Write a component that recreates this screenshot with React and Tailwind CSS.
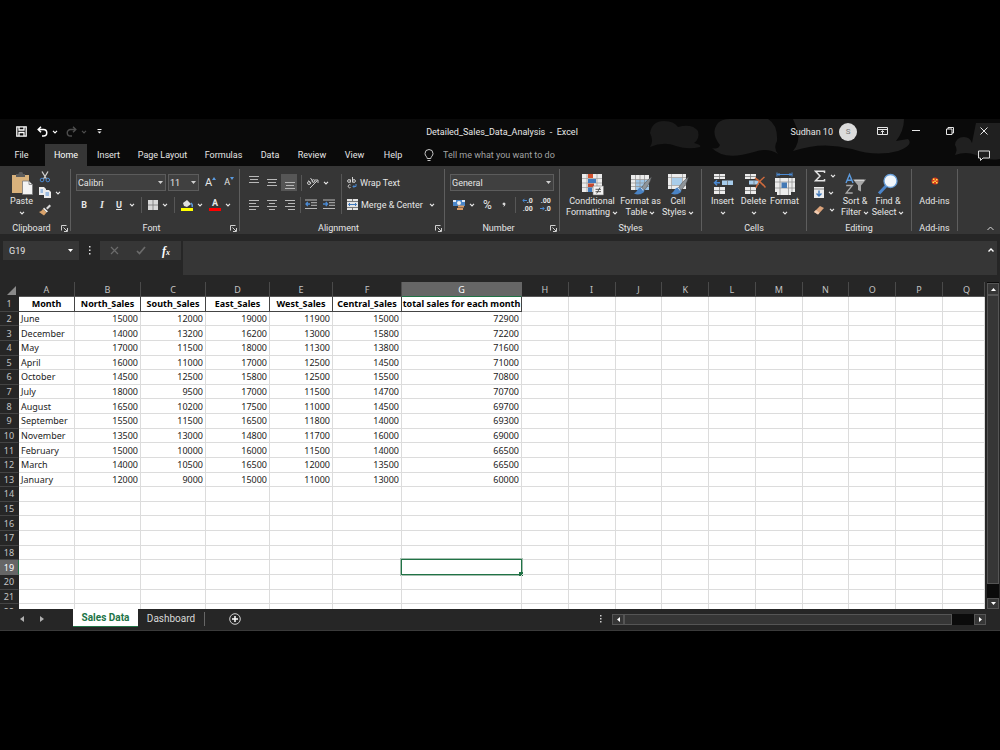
import React from "react";

const months = [
  ["June", 15000, 12000, 19000, 11900, 15000, 72900],
  ["December", 14000, 13200, 16200, 13000, 15800, 72200],
  ["May", 17000, 11500, 18000, 11300, 13800, 71600],
  ["April", 16000, 11000, 17000, 12500, 14500, 71000],
  ["October", 14500, 12500, 15800, 12500, 15500, 70800],
  ["July", 18000, 9500, 17000, 11500, 14700, 70700],
  ["August", 16500, 10200, 17500, 11000, 14500, 69700],
  ["September", 15500, 11500, 16500, 11800, 14000, 69300],
  ["November", 13500, 13000, 14800, 11700, 16000, 69000],
  ["February", 15000, 10000, 16000, 11500, 14000, 66500],
  ["March", 14000, 10500, 16500, 12000, 13500, 66500],
  ["January", 12000, 9000, 15000, 11000, 13000, 60000],
];
const headings = ["Month", "North_Sales", "South_Sales", "East_Sales", "West_Sales", "Central_Sales", "total sales for each month"];
const letters = "ABCDEFGHIJKLMNOPQ".split("");
const colWidths = ["w-[56px]", "w-[66px]", "w-[65px]", "w-[64px]", "w-[63px]", "w-[69px]", "w-[120px]"];
const rowNumbers = Array.from({ length: 22 }, (_, i) => i + 1);

function Chevron({ className = "" }) {
  return (
    <svg className={"shrink-0 " + className} width="6" height="4" viewBox="0 0 6 4" fill="none" stroke="currentColor" strokeWidth="1.2">
      <path d="M1 .8 3 2.8 5 .8" />
    </svg>
  );
}

function Caret({ className = "" }) {
  return (
    <svg className={"shrink-0 " + className} width="5" height="3" viewBox="0 0 5 3" fill="currentColor">
      <path d="M0 0H5L2.5 3Z" />
    </svg>
  );
}

function Group({ label, width, launcher, children }) {
  return (
    <section className={"flex shrink-0 flex-col " + width}>
      <div className="flex min-h-0 flex-1">
        <div className="flex min-w-0 flex-1 flex-col">
          <div className="h-[55px]">{children}</div>
          <div className="flex h-[13px] items-center">
            <span className={"flex-1 text-center " + (launcher ? "pl-0.5" : "")}>{label}</span>
            {launcher && (
              <button aria-label={label + " settings"} className="mr-0.5 mt-px text-[#d0d0d0]">
                <svg width="7" height="7" viewBox="0 0 7 7" fill="none" stroke="currentColor">
                  <path d="M.5 5.5V.5H5.5M2.5 2.5 6 6M6.5 3V6.5H3" />
                </svg>
              </button>
            )}
          </div>
        </div>
        <div className="mb-[3px] mt-[3px] w-px bg-[#5e5e5e]" />
      </div>
    </section>
  );
}

function BigButton({ icon, lines, width }) {
  return (
    <button className={"flex flex-col items-center pt-[5px] leading-[11px] " + width}>
      <span className="flex h-[25px] items-center justify-center">{icon}</span>
      <span className="whitespace-nowrap">{lines[0]}</span>
      <span className="flex h-[11px] items-center gap-[2px] whitespace-nowrap">
        {lines[1]}
        <Chevron />
      </span>
    </button>
  );
}

function IconButton({ label, chevron, className = "", children }) {
  return (
    <button aria-label={label} className={"flex shrink-0 items-center gap-1 " + className}>
      {children}
      {chevron && <Chevron />}
    </button>
  );
}

function Lines({ rows, color = "#b8b8b8" }) {
  return (
    <svg width="11" height="11" viewBox="0 0 11 11" stroke={color}>
      {rows.map(([x1, x2, y]) => (
        <path key={y} d={`M${x1} ${y}.5H${x2}`} />
      ))}
    </svg>
  );
}

function Divider({ height = "h-4" }) {
  return <span className={"w-px shrink-0 bg-[#575757] " + height} />;
}

function Grid({ children }) {
  return (
    <svg width="24" height="24" viewBox="0 0 24 24">
      {children}
    </svg>
  );
}

const PasteIcon = (
  <svg width="22" height="23" viewBox="0 0 22 23">
    <path d="M1 3H18V21H1Z" fill="#d9b27c" />
    <path d="M5 2H7.500a2.200 2.200 0 0 1 4.500 0H14V5H5Z" fill="#5c5c5c" />
    <path d="M11.500 9H18L21.500 12.500V22.500H11.500Z" fill="#f3f3f3" stroke="#777" strokeWidth=".8" />
    <path d="M18 9V12.500H21.500" fill="none" stroke="#777" strokeWidth=".8" />
  </svg>
);

const brush = (
  <g>
    <path d="M22.500 5C18 8 14 13 12.500 16L15.500 18C18 15 21 11 22.500 5Z" fill="#8e9499" stroke="#454545" strokeWidth=".5" />
    <path d="M12 15.500C8.500 15.500 8.500 20 5 21.500C9 23.500 15 22 15.500 18.500Z" fill="#4a83c4" />
    <path d="M12 16.500c1.500 0 2 1 2 2" stroke="#cfe2f5" fill="none" />
  </g>
);

const ConditionalIcon = (
  <Grid>
    <path d="M2 2H22V20H2Z" fill="#ececec" />
    <path d="M2 6.500H22M2 11H22M2 15.500H22M7 2V20M17 2V20" stroke="#9a9a9a" strokeWidth=".7" />
    <path d="M8 2H13V6H8Z" fill="#d35230" />
    <path d="M8 7H16V11H8Z" fill="#3f79bd" />
    <path d="M8 11.500H14V15H8Z" fill="#c5482f" />
    <path d="M8 15.500H12V20H8Z" fill="#3f79bd" />
    <path d="M13 14H23.500V23H13Z" fill="#f4f4f4" stroke="#777" strokeWidth=".6" />
    <path d="M15.500 17.300H21M15.500 19.700H21M20 15.500 16.700 21.500" stroke="#444" strokeWidth=".9" />
  </Grid>
);

const FormatTableIcon = (
  <Grid>
    <path d="M2 3H20V18H2Z" fill="#ececec" />
    <path d="M7 8H20V18H7Z" fill="#9fc6e8" />
    <path d="M2 7.500H20M2 11H20M2 14.500H20M6.500 3V18M11 3V18M15.500 3V18" stroke="#8c8c8c" strokeWidth=".7" />
    {brush}
  </Grid>
);

const CellStylesIcon = (
  <Grid>
    <path d="M2 2H20V17H2Z" fill="#ececec" />
    <path d="M6 6H16V13H6Z" fill="#a9cdea" />
    <path d="M2 5.500H20M2 13.500H20M5.500 2V17M16.500 2V17" stroke="#9a9a9a" strokeWidth=".7" />
    {brush}
  </Grid>
);

const InsertIcon = (
  <Grid>
    <path d="M3 2H14V7H3ZM3 15H14V22H3Z" fill="#ececec" />
    <path d="M11 8.500H22V13H11Z" fill="#a6cbea" />
    <path d="M3 4.500H14M3 18.500H14M8.500 2V7M8.500 15V22M16.500 8.500V13" stroke="#777" strokeWidth=".8" />
    <path d="M9 10.700H3.500M6 8.200 3.500 10.700 6 13.200" stroke="#4a8ad4" strokeWidth="1.500" fill="none" />
  </Grid>
);

const DeleteIcon = (
  <Grid>
    <path d="M3 2H14V7H3ZM3 15H14V22H3Z" fill="#ececec" />
    <path d="M7 8.500H17V12.500H7Z" fill="#a6cbea" />
    <path d="M3 4.500H14M3 18.500H14M8.500 2V7M8.500 15V22M12 8.500V12.500" stroke="#777" strokeWidth=".8" />
    <path d="M13 6Q18 9 23.500 15.500M22.500 5Q16 10 14 16" stroke="#cf6a3c" strokeWidth="1.500" fill="none" />
  </Grid>
);

const FormatIcon = (
  <Grid>
    <path d="M4 2.500H19M4 .5V4.500M19 .5V4.500M6.500 1 5 2.500 6.500 4M16.500 1 18 2.500 16.500 4" stroke="#4a8ad4" fill="none" />
    <path d="M2 6H22V20H2ZM4 20H18V23H4Z" fill="#ececec" />
    <path d="M2 10H22M2 16H22M7 6V23M15.500 6V23M19 6V20" stroke="#8a8a8a" strokeWidth=".7" />
    <path d="M8.500 10.500H14V16H8.500Z" fill="#4479b5" />
  </Grid>
);

const SortIcon = (
  <svg width="24" height="24" viewBox="0 0 24 24" fill="none">
    <path d="M3 11 6.500 2.500 10 11M4.200 8.200H8.800" stroke="#5b9be0" strokeWidth="1.400" />
    <path d="M3.200 13.500H9.300L3.200 21H9.700" stroke="#a9a9a9" strokeWidth="1.300" />
    <path d="M10 7.500H23L18 13.500V19.500L15 18V13.500Z" fill="#a6a6a6" />
    <path d="M11.500 8.300H21" stroke="#ddd" />
  </svg>
);

const FindIcon = (
  <svg width="24" height="24" viewBox="0 0 24 24" fill="none">
    <path d="M10.500 13.500 3 21.500" stroke="#4b84c9" strokeWidth="3" />
    <circle cx="14.500" cy="9" r="6.500" fill="#f1f6fb" stroke="#6aa0da" strokeWidth="1.300" />
  </svg>
);

function TitleBar() {
  return (
    <header className="flex h-[25px] items-center">
      <div className="flex flex-1 items-center pl-4">
        <button aria-label="Save" className="text-white">
          <svg width="11" height="11" viewBox="0 0 11 11" fill="none" stroke="currentColor" strokeWidth="1.300">
            <path d="M.8.8H10.200V10.200H.8ZM3 .8V4H8V.8M3 10V6.500H8V10" />
          </svg>
        </button>
        <IconButton label="Undo" chevron className="ml-2.5 text-white">
          <svg width="11" height="11" viewBox="0 0 11 11" fill="none" stroke="currentColor" strokeWidth="1.500">
            <path d="M4 .8 1.200 3.500 4 6.300M1.200 3.500H6.500a3 3 0 0 1 0 6.500H5" />
          </svg>
        </IconButton>
        <IconButton label="Redo" chevron className="ml-2 text-[#4d4d4d]">
          <svg width="11" height="11" viewBox="0 0 11 11" fill="none" stroke="currentColor" strokeWidth="1.400">
            <path d="M7 .8 9.800 3.500 7 6.300M9.800 3.500H4.500a3 3 0 0 0 0 6.500H6" />
          </svg>
        </IconButton>
        <button aria-label="Customize toolbar" className="ml-2.5 text-white">
          <svg width="5" height="5" viewBox="0 0 5 5" fill="currentColor">
            <path d="M.5 0H4.500V1H.5ZM.5 2.500H4.500L2.500 4.500Z" />
          </svg>
        </button>
      </div>
      <h1 className="whitespace-pre text-[#e8e8e8]">Detailed_Sales_Data_Analysis  -  Excel</h1>
      <div className="flex flex-1 items-center justify-end pr-3 text-[#e6e6e6]">
        <span>Sudhan 10</span>
        <span className="ml-1.5 flex size-[18px] items-center justify-center rounded-full bg-[#dcdcdc] text-[8px] text-[#777]">S</span>
        <button aria-label="Ribbon display options" className="ml-5">
          <svg width="11" height="9" viewBox="0 0 11 9" fill="none" stroke="currentColor">
            <path d="M.5 .5H10.500V7.500H.5ZM.5 2.500H10.500M5.500 7V4M3.800 5.200 5.500 3.500 7.200 5.200" />
          </svg>
        </button>
        <button aria-label="Minimize" className="ml-6">
          <svg width="8" height="9" viewBox="0 0 8 9" stroke="currentColor"><path d="M0 3.500H8" /></svg>
        </button>
        <button aria-label="Restore" className="mb-0.5 ml-[26px]">
          <svg width="8" height="8" viewBox="0 0 8 8" fill="none" stroke="currentColor">
            <path d="M.5 2H6V7.500H.5ZM2 2V.5H7.500V6H6" />
          </svg>
        </button>
        <button aria-label="Close" className="mb-0.5 ml-[26px]">
          <svg width="8" height="8" viewBox="0 0 8 8" stroke="currentColor"><path d="M.5.5 7.500 7.500M7.500.5.5 7.500" /></svg>
        </button>
      </div>
    </header>
  );
}

const tabs = [
  ["File", "w-[43px]"],
  ["Home", "w-[42px]"],
  ["Insert", "w-[43px]"],
  ["Page Layout", "w-[65px]"],
  ["Formulas", "w-[57px]"],
  ["Data", "w-[36px]"],
  ["Review", "w-[48px]"],
  ["View", "w-[37px]"],
  ["Help", "w-[40px]"],
];

function RibbonTabs() {
  return (
    <nav className="flex h-[22px] items-center text-[#e6e6e6]">
      {tabs.map(([name, width]) => (
        <button
          key={name}
          className={"h-full shrink-0 text-center " + width + (name === "Home" ? " bg-[#363636] text-white" : "") + (name === "File" ? " mr-0.5" : "")}
        >
          {name}
        </button>
      ))}
      <svg className="ml-[11px]" width="10" height="13" viewBox="0 0 10 13" fill="none" stroke="#c8c8c8">
        <path d="M3.200 9.500C3.200 7.500 1 7 1 4.500a4 4 0 0 1 8 0C9 7 6.800 7.500 6.800 9.500ZM3.500 11.500H6.500" />
      </svg>
      <input aria-label="Tell me what you want to do" placeholder="Tell me what you want to do" className="ml-[9px] w-40 bg-transparent placeholder:text-[#a3a3a3] placeholder:opacity-100" />
      <button aria-label="Comments" className="ml-auto mr-2.5 text-[#dcdcdc]">
        <svg width="12" height="11" viewBox="0 0 12 11" fill="none" stroke="currentColor">
          <path d="M.5 1H11.500V8H5L2.500 10.500V8H.5Z" />
        </svg>
      </button>
    </nav>
  );
}

function Combo({ label, value, width }) {
  return (
    <span className={"relative h-[17px] shrink-0 " + width}>
      <select aria-label={label} defaultValue={value} className="size-full appearance-none border border-[#5c5c5c] bg-[#404040] pl-px text-[#e6e6e6]">
        <option>{value}</option>
      </select>
      <Caret className="pointer-events-none absolute right-[3px] top-[7px] text-[#d0d0d0]" />
    </span>
  );
}

function FontGroup() {
  return (
    <Group label="Font" width="w-[169px]" launcher>
      <div className="flex h-full flex-col pl-[5px] pt-2">
        <div className="flex h-[17px] items-center">
          <Combo label="Font name" value="Calibri" width="w-[90px]" />
          <span className="w-[2px]" />
          <Combo label="Font size" value="11" width="w-[31px]" />
          <button aria-label="Increase font size" className="ml-1.5 flex text-[11px] leading-none">
            A<svg width="4" height="3" viewBox="0 0 4 3" fill="#5b9be0"><path d="M0 3 2 0 4 3Z" /></svg>
          </button>
          <button aria-label="Decrease font size" className="ml-2 flex text-[9px] leading-none">
            A<svg className="-mt-px" width="4" height="3" viewBox="0 0 4 3" fill="#5b9be0"><path d="M0 0H4L2 3Z" /></svg>
          </button>
        </div>
        <div className="mt-[5px] flex h-[17px] items-center">
          <button className="ml-1 w-2 font-bold">B</button>
          <button className="ml-2.5 w-2 font-['Liberation_Serif',serif] text-[10px] font-bold italic">I</button>
          <button className="ml-[9px] w-2 font-bold underline">U</button>
          <Chevron className="ml-1.5" />
          <span className="w-1.5" />
          <Divider />
          <IconButton label="Borders" chevron className="ml-1.5">
            <svg width="10" height="10" viewBox="0 0 10 10"><path d="M0 0H10V10H0Z" fill="#d8d8d8" /><path d="M5 0V10M0 5H10" stroke="#777" strokeWidth=".8" /></svg>
          </IconButton>
          <span className="w-1.5" />
          <Divider />
          <IconButton label="Fill color" chevron className="ml-1.5">
            <svg width="12" height="12" viewBox="0 0 12 12">
              <path d="M2 4 6 1 10 5 6 8 3 7Z" fill="#dedede" />
              <path d="M10 4Q12 6 11 8" stroke="#5b9be0" strokeWidth="1.500" fill="none" />
              <path d="M0 9H12V12H0Z" fill="#ff0" />
            </svg>
          </IconButton>
          <IconButton label="Font color" chevron className="ml-1.5">
            <span className="flex w-3 flex-col items-center text-[9px] font-bold leading-[9px]">
              A<span className="h-[3px] w-full bg-[#f00]" />
            </span>
          </IconButton>
        </div>
      </div>
    </Group>
  );
}

function AlignmentGroup() {
  const indent = (
    <path d="M0 1H12M6 3.700H12M6 6.300H12M0 9.500H12" stroke="#b8b8b8" />
  );
  return (
    <Group label="Alignment" width="w-[205px]" launcher>
      <div className="flex h-full pl-2 pt-2">
        <div className="flex w-[93px] flex-col">
          <div className="flex h-[17px] items-center">
            <button aria-label="Top align" className="mb-1.5"><Lines rows={[[1, 11, 2], [2, 10, 5], [1, 11, 8]]} /></button>
            <button aria-label="Middle align" className="ml-[7px]"><Lines rows={[[1, 11, 2], [2, 10, 5], [1, 11, 8]]} /></button>
            <button aria-label="Bottom align" className="ml-1 flex h-[17px] w-4 items-end justify-center bg-[#565656]"><Lines rows={[[1, 11, 2], [2, 10, 5], [1, 11, 8]]} /></button>
            <span className="w-1" />
            <Divider />
            <IconButton label="Orientation" chevron className="ml-1">
              <svg width="13" height="12" viewBox="0 0 13 12" fill="none" stroke="#c8c8c8">
                <circle cx="3" cy="6" r="1.500" /><path d="M2.500 3.500 5 7M4.500 1 7.500 5.500" /><circle cx="7.500" cy="4" r="1.400" /><path d="M4 11 11.500 3.500M12 6V3H9" />
              </svg>
            </IconButton>
          </div>
          <div className="mt-[5px] flex h-[17px] items-center">
            <button aria-label="Align left"><Lines rows={[[1, 11, 1], [1, 8, 4], [1, 11, 7], [1, 8, 10]]} /></button>
            <button aria-label="Center" className="ml-[7px]"><Lines rows={[[1, 11, 1], [3, 9, 4], [1, 11, 7], [3, 9, 10]]} /></button>
            <button aria-label="Align right" className="ml-[7px]"><Lines rows={[[1, 11, 1], [4, 11, 4], [1, 11, 7], [4, 11, 10]]} /></button>
            <span className="w-[5px]" />
            <Divider />
            <button aria-label="Decrease indent" className="ml-1">
              <svg width="12" height="11" viewBox="0 0 12 11" fill="none">{indent}<path d="M5 5H1M2.800 3 1 5 2.800 7" stroke="#4a8ad4" strokeWidth="1.300" /></svg>
            </button>
            <button aria-label="Increase indent" className="ml-[6px]">
              <svg width="12" height="11" viewBox="0 0 12 11" fill="none">{indent}<path d="M0 5H4M2.800 3 4.500 5 2.800 7" stroke="#4a8ad4" strokeWidth="1.300" /></svg>
            </button>
          </div>
        </div>
        <Divider height="h-10" />
        <div className="flex flex-1 flex-col pl-[5px]">
          <button className="flex h-[17px] items-center gap-[3px] whitespace-nowrap">
            <svg width="10" height="12" viewBox="0 0 10 12" fill="none" stroke="#d0d0d0">
              <circle cx="2" cy="4" r="1.400" /><path d="M3.500 2.500V5.500M5.500 0V5.500M3.500 8A1.500 1.500 0 1 0 3.500 10.500" /><circle cx="7" cy="4" r="1.400" /><path d="M9 7V9.500H6M7.200 8.200 6 9.500 7.200 10.800" stroke="#4a8ad4" />
            </svg>
            Wrap Text
          </button>
          <div className="mt-[5px] flex h-[17px] items-center">
            <button className="flex items-center gap-[3px] whitespace-nowrap">
              <svg width="11" height="11" viewBox="0 0 11 11"><path d="M0 0H11V11H0Z" fill="#e4e4e4" /><path d="M0 2.500H11M0 8.500H11M5.500 0V2.500M5.500 8.500V11" stroke="#777" /><path d="M1.500 5.500H9.500M3 4 1.500 5.500 3 7M8 4 9.500 5.500 8 7" stroke="#3f79bd" fill="none" /></svg>
              Merge &amp; Center
            </button>
            <IconButton label="Merge options" chevron className="ml-1.5" />
          </div>
        </div>
      </div>
    </Group>
  );
}

function NumberGroup() {
  return (
    <Group label="Number" width="w-[115px]" launcher>
      <div className="flex h-full flex-col pl-[5px] pt-2">
        <Combo label="Number format" value="General" width="w-[104px]" />
        <div className="mt-[5px] flex h-[17px] items-center">
          <IconButton label="Accounting format" chevron className="ml-[3px]">
            <svg width="12" height="12" viewBox="0 0 12 12">
              <path d="M0 1H12V7H0Z" fill="#4a86c8" /><circle cx="6" cy="4" r="2" fill="#eee" /><path d="M0 1H3V3H0ZM9 1H12V3H9Z" fill="#dfe9f5" />
              <path d="M5 6.500H11V8.500H5ZM4 9H10V11H4Z" fill="#d99a63" />
            </svg>
          </IconButton>
          <button aria-label="Percent style" className="ml-2 text-[12px]">%</button>
          <button aria-label="Comma style" className="ml-2.5 flex h-[12px] items-start">
            <svg width="4" height="11" viewBox="0 0 4 11" fill="#d8d8d8"><path d="M.5 5A1.500 1.500 0 1 1 3.500 5Q3.500 7 1 8Q2 7 2 6.200Q.5 6 .5 5Z" /></svg>
          </button>
          <span className="w-[9px]" />
          <Divider />
          <button aria-label="Increase decimal" className="ml-1.5 flex flex-col items-end text-[7px] font-bold leading-[8px]">
            <span className="flex items-center"><svg width="5" height="5" viewBox="0 0 5 5" fill="none" stroke="#4a8ad4"><path d="M5 2.500H1M2.500 .8 .8 2.500 2.500 4.200" /></svg>.0</span>
            <span>.00</span>
          </button>
          <button aria-label="Decrease decimal" className="ml-[7px] flex flex-col items-end text-[7px] font-bold leading-[8px]">
            <span>.00</span>
            <span className="flex items-center"><svg width="5" height="5" viewBox="0 0 5 5" fill="none" stroke="#4a8ad4"><path d="M0 2.500H4M2.500 .8 4.200 2.500 2.500 4.200" /></svg>.0</span>
          </button>
        </div>
      </div>
    </Group>
  );
}

function Ribbon() {
  return (
    <div className="flex h-[68px] bg-[#363636] text-[#e6e6e6]">
      <Group label="Clipboard" width="w-[71px]" launcher>
        <div className="flex h-full">
          <BigButton icon={PasteIcon} lines={["Paste", ""]} width="ml-[6px] w-[31px]" />
          <div className="flex flex-col pl-0.5 pt-1">
            <IconButton label="Cut" className="h-[13px]">
              <svg width="12" height="12" viewBox="0 0 12 12" fill="none"><path d="M3 .5 7.500 8M9 .5 4.500 8" stroke="#d0d0d0" strokeWidth="1.300" /><circle cx="3" cy="9" r="1.800" stroke="#4a8ad4" /><circle cx="8.800" cy="9" r="1.800" stroke="#4a8ad4" /></svg>
            </IconButton>
            <IconButton label="Copy" chevron className="mt-[3px] h-[13px]">
              <svg width="12" height="11" viewBox="0 0 12 11"><path d="M0 0H5L7 2V8H0ZM5 3H10L12 5V11H5Z" fill="#ececec" /><path d="M1.500 3H4M1.500 5H4M6.500 6H10M6.500 8H10" stroke="#4a8ad4" /></svg>
            </IconButton>
            <IconButton label="Format painter" className="mt-1 h-[13px]">
              <svg width="12" height="12" viewBox="0 0 12 12"><path d="M7 4 10.500 .5 12 2 8.500 5.500Z" fill="#d8d8d8" /><path d="M5 3.500 9 7.500 7.500 8.500 4 5Z" fill="#eee" /><path d="M4 5 7.500 8.500 5 11.500 0 8Q2.500 7.500 4 5Z" fill="#d9a26b" /></svg>
            </IconButton>
          </div>
        </div>
      </Group>
      <FontGroup />
      <AlignmentGroup />
      <NumberGroup />
      <Group label="Styles" width="w-[142px]">
        <div className="flex h-full pl-1.5">
          <BigButton icon={ConditionalIcon} lines={["Conditional", "Formatting"]} width="w-[52px]" />
          <BigButton icon={FormatTableIcon} lines={["Format as", "Table"]} width="w-[45px]" />
          <BigButton icon={CellStylesIcon} lines={["Cell", "Styles"]} width="w-[30px]" />
        </div>
      </Group>
      <Group label="Cells" width="w-[105px]">
        <div className="flex h-full pl-[5px]">
          <BigButton icon={InsertIcon} lines={["Insert", ""]} width="w-[31px]" />
          <BigButton icon={DeleteIcon} lines={["Delete", ""]} width="w-[31px]" />
          <BigButton icon={FormatIcon} lines={["Format", ""]} width="w-[31px]" />
        </div>
      </Group>
      <Group label="Editing" width="w-[105px]">
        <div className="flex h-full">
          <div className="flex w-[32px] flex-col pl-[7px] pt-[3px]">
            <IconButton label="AutoSum" chevron className="h-[13px]">
              <svg width="12" height="12" viewBox="0 0 12 12" fill="none" stroke="#e4e4e4" strokeWidth="1.500"><path d="M10.500 3V1.200H1.500L6 6 1.500 10.800H10.500V9" /></svg>
            </IconButton>
            <IconButton label="Fill" chevron className="mt-1 h-[13px]">
              <svg width="10" height="11" viewBox="0 0 10 11"><path d="M0 0H10V11H0Z" fill="#ececec" /><path d="M0 2H10" stroke="#888" /><path d="M5 3.500V9M2.500 6.500 5 9 7.500 6.500" stroke="#3f79bd" strokeWidth="1.400" fill="none" /></svg>
            </IconButton>
            <IconButton label="Clear" chevron className="mt-1 h-[13px]">
              <svg width="11" height="10" viewBox="0 0 11 10"><path d="M0 7 6 1 10 3 4 9.500Z" fill="#dca37a" /><path d="M0 7 2 5 5.500 7.800 4 9.500Z" fill="#f0cdb4" /></svg>
            </IconButton>
          </div>
          <BigButton icon={SortIcon} lines={["Sort &", "Filter"]} width="w-[32px]" />
          <BigButton icon={FindIcon} lines={["Find &", "Select"]} width="w-[34px]" />
        </div>
      </Group>
      <Group label="Add-ins" width="w-[46px]">
        <button className="flex w-full flex-col items-center pt-[5px] leading-[11px]">
          <span className="flex h-[20px] items-center">
            <svg width="8" height="8" viewBox="0 0 8 8"><circle cx="4" cy="4" r="3.500" fill="#d93a1c" /><path d="M2 1.500H3.500V3H2ZM5 2H6.500V3.500H5ZM3.300 3.500H4.800V5H3.300ZM1.500 4.500H3V6H1.500ZM5 5H6.500V6.500H5Z" fill="#ffe34d" /></svg>
          </span>
          <span className="pt-[5px]">Add-ins</span>
        </button>
      </Group>
      <button aria-label="Collapse ribbon" className="mb-[3px] ml-auto mr-1.5 self-end">
        <svg width="7" height="5" viewBox="0 0 7 5" fill="none" stroke="#d8d8d8"><path d="M.5 4 3.500 1 6.500 4" /></svg>
      </button>
    </div>
  );
}

function FormulaBar() {
  return (
    <div className="flex h-[48px] items-start bg-[#262626] pl-[3px] pr-[3px] pt-[7px]">
      <div className="relative flex h-[19px] w-[76px] shrink-0 items-center bg-[#363636]">
        <input aria-label="Name box" defaultValue="G19" className="w-full bg-transparent pl-[6px] text-[#e6e6e6]" />
        <Caret className="absolute right-[6px] top-2 text-white" />
      </div>
      <span className="flex h-[19px] w-[21px] shrink-0 items-center justify-center">
        <svg width="2" height="9" viewBox="0 0 2 9" fill="#ddd"><path d="M0 0H1.500V1.500H0ZM0 3.500H1.500V5H0ZM0 7H1.500V8.500H0Z" /></svg>
      </span>
      <div className="flex h-[19px] w-[81px] shrink-0 items-center bg-[#363636]">
        <button aria-label="Cancel" className="ml-2.5"><svg width="9" height="9" viewBox="0 0 9 9" stroke="#6b6b6b" strokeWidth="1.200"><path d="M1 1 8 8M8 1 1 8" /></svg></button>
        <button aria-label="Enter" className="ml-[17px]"><svg width="10" height="9" viewBox="0 0 10 9" fill="none" stroke="#6b6b6b" strokeWidth="1.700"><path d="M1 5 3.500 7.500 9 1" /></svg></button>
        <button aria-label="Insert function" className="ml-4 whitespace-nowrap font-['Liberation_Serif',serif] text-[12px] font-bold italic leading-none text-white">f<span className="text-[8px]">x</span></button>
      </div>
      <div className="relative ml-0.5 h-[34px] flex-1">
        <input aria-label="Formula" className="size-full bg-[#363636] px-2 text-[#e6e6e6]" />
        <button aria-label="Collapse formula bar" className="absolute right-[3px] top-[7px]"><svg width="6" height="4" viewBox="0 0 6 4" fill="none" stroke="#fff" strokeWidth="1.400"><path d="M.5 3.500 3 1 5.500 3.500" /></svg></button>
      </div>
    </div>
  );
}

function cellClass(row, col) {
  if (row === 1 && col < 7) return "border-r border-b border-[#444] text-center font-bold text-black";
  return "border-r border-b border-[#dcdcdc] text-[#1c1c1c] " + (col === 0 ? "pl-0.5 text-left" : "pr-0.5 text-right");
}

function cellValue(row, col) {
  if (row === 1) return headings[col];
  return months[row - 2]?.[col];
}

function Sheet() {
  return (
    <div className="flex bg-[#262626]">
      <div className="min-w-0 flex-1 font-['Noto_Sans',sans-serif]">
        <div className="h-[327px] overflow-hidden">
          <table className="w-full table-fixed border-separate border-spacing-0 leading-[12px]">
            <colgroup>
              <col className="w-[19px]" />
              {colWidths.map((w) => <col key={w} className={w} />)}
              {letters.slice(7, 16).map((l) => <col key={l} />)}
              <col className="w-[42px]" />
            </colgroup>
            <thead>
              <tr className="h-[15px]">
                <td className="border-b border-[#262626] p-0">
                  <svg className="ml-auto mr-[3px] mt-0.5" width="9" height="9" viewBox="0 0 9 9" fill="#8a8a8a"><path d="M9 0V9H0Z" /></svg>
                </td>
                {letters.map((l) => (
                  <th key={l} scope="col" className={"border-b border-r pb-0 pr-0 pt-px font-normal " + (l === "Q" ? "pl-1.5 " : "pl-0 ") + (l === "G" ? "border-b-[#217346] border-r-[#666] bg-[#666] text-white" : "border-b-[#555] border-r-[#4a4a4a] text-[#c4c4c4]")}>{l}</th>
                ))}
              </tr>
            </thead>
          </table>
          <table className="h-[322px] w-full table-fixed border-separate border-spacing-0 bg-white leading-[12px]">
            <colgroup>
              <col className="w-[19px]" />
              {colWidths.map((w) => <col key={w} className={w} />)}
              {letters.slice(7, 16).map((l) => <col key={l} />)}
              <col className="w-[42px]" />
            </colgroup>
            <tbody>
              {rowNumbers.map((r) => (
                <tr key={r}>
                  <th scope="row" className={"border-b border-r px-0 pb-0 pt-px text-center font-normal " + (r === 19 ? "border-b-[#666] border-r-[#217346] bg-[#666] text-white" : "border-b-[#444] border-r-[#262626] bg-[#262626] text-[#c4c4c4]")}>{r}</th>
                  {letters.map((l, c) => (
                    <td key={l} className={"relative whitespace-nowrap px-0 pb-0 pt-px " + cellClass(r, c)}>
                      {cellValue(r, c)}
                      {r === 19 && l === "G" && (
                        <span className="absolute -inset-px border border-[#217346] outline outline-[#a5bfb0]">
                          <span className="absolute -bottom-[2px] -right-[2px] size-[4px] bg-[#217346]" />
                        </span>
                      )}
                    </td>
                  ))}
                </tr>
              ))}
            </tbody>
          </table>
        </div>
      </div>
      <div className="ml-0.5 mr-px flex w-3 flex-col bg-[#0b0b0b] pt-px">
        <button aria-label="Scroll up" className="flex h-[12px] items-center justify-center border border-[#555] bg-[#363636] text-white"><svg width="5" height="3" viewBox="0 0 5 3" fill="currentColor"><path d="M0 3H5L2.500 0Z" /></svg></button>
        <div className="flex-1 border border-[#555] bg-[#363636]" />
        <div className="h-[14px]" />
        <button aria-label="Scroll down" className="flex h-[11px] items-center justify-center border border-[#555] bg-[#363636] text-white"><Caret /></button>
      </div>
    </div>
  );
}

function SheetTabs() {
  return (
    <footer className="flex h-[22px] items-start border-b border-[#3a3a3a] bg-[#262626]">
      <button aria-label="Previous sheet" className="ml-5 mt-[7px]"><svg width="4" height="6" viewBox="0 0 4 6" fill="#b0b0b0"><path d="M4 0V6L0 3Z" /></svg></button>
      <button aria-label="Next sheet" className="ml-4 mt-[7px]"><svg width="4" height="6" viewBox="0 0 4 6" fill="#b0b0b0"><path d="M0 0V6L4 3Z" /></svg></button>
      <button className="ml-[29px] h-[18px] w-[65px] shrink-0 border-b border-[#217346] bg-white pt-px text-[10px] font-bold text-[#217346]">Sales Data</button>
      <button className="h-[18px] w-[66px] shrink-0 pt-px text-[10px] text-[#d8d8d8]">Dashboard</button>
      <span className="mt-[3px] h-[14px] w-px bg-[#666]" />
      <button aria-label="New sheet" className="ml-6 mt-1"><svg width="12" height="12" viewBox="0 0 12 12" fill="none" stroke="#d0d0d0"><circle cx="6" cy="6" r="5.300" /><path d="M6 3V9M3 6H9" stroke="#fff" strokeWidth="1.500" /></svg></button>
      <div className="ml-auto mr-[14px] flex items-start pt-1.5">
        <svg className="mr-[10px]" width="2" height="8" viewBox="0 0 2 8" fill="#ccc"><path d="M0 0H1.500V1.500H0ZM0 3H1.500V4.500H0ZM0 6H1.500V7.500H0Z" /></svg>
        <div className="-mt-px flex h-[11px] w-[374px] bg-[#0b0b0b]">
          <button aria-label="Scroll left" className="flex w-3 items-center justify-center border border-[#555] bg-[#363636]"><svg width="3" height="5" viewBox="0 0 3 5" fill="#fff"><path d="M3 0V5L0 2.500Z" /></svg></button>
          <div className="w-[328px] border border-[#555] bg-[#363636]" />
          <button aria-label="Scroll right" className="ml-auto flex w-3 items-center justify-center border border-[#555] bg-[#363636]"><svg width="3" height="5" viewBox="0 0 3 5" fill="#fff"><path d="M0 0V5L3 2.500Z" /></svg></button>
        </div>
      </div>
    </footer>
  );
}

export default function App() {
  return (
    <div className="flex min-h-screen flex-col justify-center bg-black font-['Roboto','Noto_Sans',sans-serif] text-[9px] leading-[12px]">
      <main>
        <div className="relative bg-[#0a0a0a]">
          <svg aria-hidden="true" className="absolute right-0 top-0" width="360" height="47" viewBox="0 0 360 47">
            <path d="M10 28Q14 22 10 14Q12 2 24 2Q34 2 38 8Q52 4 58 12Q60 20 54 24Q62 26 60 28Q48 31 36 27Q24 22 10 28Z" fill="#1a1a1a" />
            <path d="M72 29Q78 31 80 26Q70 14 78 4Q82 0 90 0H128Q138 6 137 22Q133 29 138 35Q128 28 114 33Q84 42 72 29Z" fill="#1e1e1e" />
            <path d="M153 32Q160 24 158 12L153 0H264Q264 12 256 22L268 20Q274 26 258 32Q236 38 212 30Q182 22 153 32Z" fill="#212121" />
            <path d="M315 36Q318 30 315 26Q316 18 324 18Q330 18 332 24L336 4H360V40Q346 42 336 36Q326 32 315 36Z" fill="#202020" />
          </svg>
          <div className="relative">
            <TitleBar />
            <RibbonTabs />
          </div>
        </div>
        <Ribbon />
        <FormulaBar />
        <Sheet />
        <SheetTabs />
      </main>
    </div>
  );
}
